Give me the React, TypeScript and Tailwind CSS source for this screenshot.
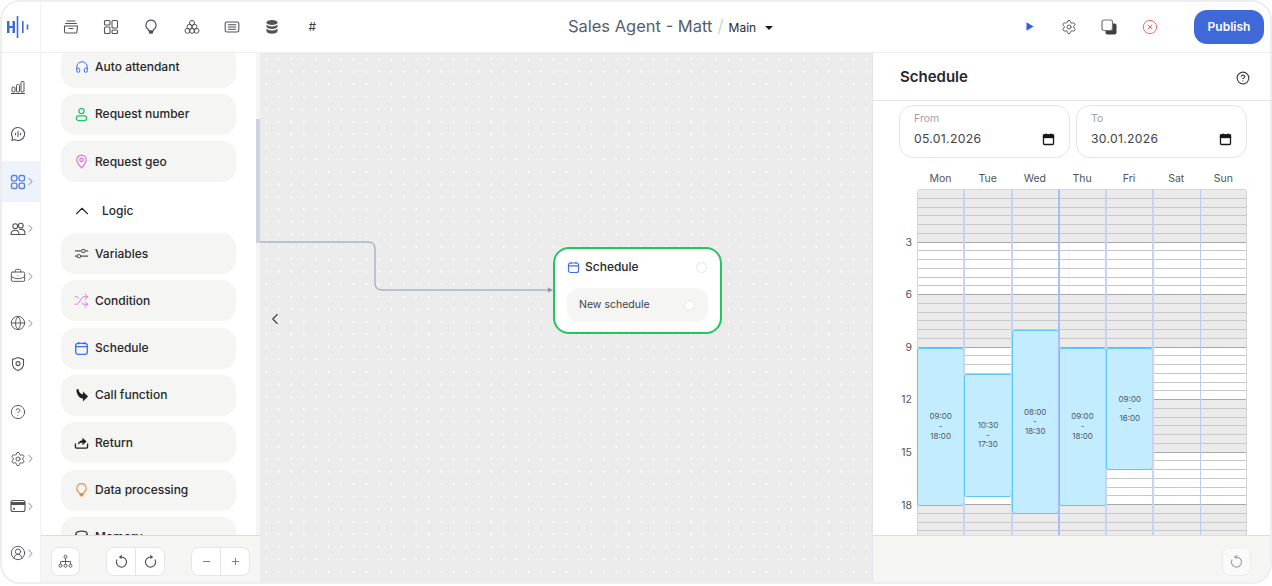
import type { ReactNode } from 'react';
import { Globe, CircleHelp, Settings, CircleUserRound, Headphones, Shuffle, ChevronRight, ChevronUp, ChevronLeft, Minus, Plus, CircleX, BriefcaseBusiness } from 'lucide-react';

const font = { fontFamily: 'Inter, sans-serif' };

// hand drawn icons, lucide has no close match for these
const ChartIcon = () => (
  <svg width="16" height="16" viewBox="0 0 16 16" fill="none" stroke="currentColor" strokeWidth="1">
    <rect x="2" y="8" width="3" height="5" rx="1" />
    <rect x="6.5" y="5.5" width="3" height="7.5" rx="1" />
    <rect x="11" y="2.5" width="3" height="10.5" rx="1" />
    <path d="M1 14.5h14" />
  </svg>
);
const ChatIcon = () => (
  <svg width="16" height="16" viewBox="0 0 16 16" fill="none" stroke="currentColor" strokeWidth="1.1" strokeLinecap="round">
    <path d="M8 1.5a6.5 6.5 0 1 1-3.4 12L2 14.5l.6-3A6.5 6.5 0 0 1 8 1.5z" />
    <path d="M8 5.5v5M5.5 7.2v1.6M10.5 7.2v1.6" />
  </svg>
);
const GridIcon = () => (
  <svg width="16" height="16" viewBox="0 0 16 16" fill="none" stroke="currentColor" strokeWidth="1.4">
    <rect x="1.5" y="1.5" width="5.4" height="5.4" rx="1.6" />
    <rect x="9.1" y="1.5" width="5.4" height="5.4" rx="1.6" />
    <rect x="1.5" y="9.1" width="5.4" height="5.4" rx="1.6" />
    <rect x="9.1" y="9.1" width="5.4" height="5.4" rx="1.6" />
  </svg>
);
const UsersIcon = () => (
  <svg width="16" height="16" viewBox="0 0 16 16" fill="none" stroke="currentColor" strokeWidth="1.1">
    <circle cx="5.2" cy="5.2" r="2.4" />
    <circle cx="10.8" cy="4.6" r="2.4" />
    <path d="M1 13.5c0-2.6 1.8-4.2 4.2-4.2s3.8 1.6 3.8 4.2z" />
    <path d="M9.2 8.4c.5-.2 1-.3 1.6-.3 2.5 0 4.2 1.8 4.2 4.6v.8H9" />
  </svg>
);
const ShieldIcon = () => (
  <svg width="16" height="16" viewBox="0 0 16 16" fill="none" stroke="currentColor" strokeWidth="1.1">
    <path d="M8 1.5l5.5 2v4.7c0 3-2.3 5-5.5 6.3-3.2-1.3-5.5-3.3-5.5-6.3V3.5z" />
    <circle cx="8" cy="7.6" r="2" />
  </svg>
);
const CardIcon = () => (
  <svg width="16" height="16" viewBox="0 0 16 16" fill="none" stroke="currentColor" strokeWidth="1.1">
    <rect x="1" y="2.5" width="14" height="11" rx="2" />
    <rect x="1" y="4" width="14" height="3" fill="currentColor" stroke="none" />
    <rect x="3" y="10" width="2" height="1.6" fill="currentColor" stroke="none" />
  </svg>
);
const ArchiveIcon = () => (
  <svg width="16" height="16" viewBox="0 0 16 16" fill="none" stroke="currentColor" strokeWidth="1.1" strokeLinecap="round">
    <path d="M4 2h8" />
    <path d="M2.5 4.5h11" />
    <path d="M1.5 7h13l-.5 5.5a1.5 1.5 0 0 1-1.5 1.5h-9.5a1.5 1.5 0 0 1-1.5-1.5z" />
    <path d="M6 9.5h4" />
  </svg>
);
const TilesIcon = () => (
  <svg width="16" height="16" viewBox="0 0 16 16" fill="none" stroke="currentColor" strokeWidth="1.1">
    <rect x="1.5" y="1.5" width="5.5" height="4.5" rx="1" />
    <rect x="9" y="1.5" width="5.5" height="7.5" rx="1" />
    <rect x="1.5" y="8" width="5.5" height="6.5" rx="1" />
    <rect x="9" y="11" width="5.5" height="3.5" rx="1" />
  </svg>
);
const BulbIcon = ({ color = 'currentColor' }: { color?: string }) => (
  <svg width="16" height="16" viewBox="0 0 16 16" fill="none" stroke={color} strokeWidth="1.2">
    <path d="M8 1.2a5 5 0 0 0-3 9c.6.5.8 1 .9 1.6h4.2c.1-.6.3-1.1.9-1.6a5 5 0 0 0-3-9z" />
    <path d="M5.9 12h4.2v1.3a1.5 1.5 0 0 1-1.5 1.5H7.4a1.5 1.5 0 0 1-1.5-1.5z" fill={color} stroke="none" />
  </svg>
);
const ClusterIcon = () => (
  <svg width="16" height="16" viewBox="0 0 16 16" fill="none" stroke="currentColor" strokeWidth="1">
    <circle cx="8" cy="4" r="2.5" />
    <circle cx="5.5" cy="7.8" r="2.5" />
    <circle cx="10.5" cy="7.8" r="2.5" />
    <circle cx="3.5" cy="11.8" r="2.5" />
    <circle cx="8" cy="11.8" r="2.5" />
    <circle cx="12.5" cy="11.8" r="2.5" />
  </svg>
);
const ListCardIcon = () => (
  <svg width="16" height="16" viewBox="0 0 16 16" fill="none" stroke="currentColor" strokeWidth="1.1">
    <rect x="1.2" y="3" width="13.6" height="10" rx="1.5" />
    <path d="M3.8 5.8h8.4M3.8 8h8.4M3.8 10.2h8.4" />
  </svg>
);
const DiscsIcon = () => (
  <svg width="16" height="16" viewBox="0 0 16 16" fill="currentColor">
    <ellipse cx="8" cy="3.5" rx="5.5" ry="2.5" />
    <path d="M2.5 5.4c1 1.3 3.1 2 5.5 2s4.5-.7 5.5-2v2.2c0 1.3-2.5 2.4-5.5 2.4s-5.5-1.1-5.5-2.4z" />
    <path d="M2.5 9.4c1 1.3 3.1 2 5.5 2s4.5-.7 5.5-2v2.8c0 1.5-2.5 2.5-5.5 2.5s-5.5-1-5.5-2.5z" />
  </svg>
);
const CopyIcon = () => (
  <svg width="16" height="16" viewBox="0 0 16 16">
    <rect x="4.5" y="4.5" width="11" height="11" rx="2" fill="#3f3f46" />
    <rect x="1" y="1" width="10.5" height="10.5" rx="2" fill="#ffffff" stroke="#71717a" strokeWidth="1.2" />
  </svg>
);
const PlayIcon = () => (
  <svg width="8" height="9" viewBox="0 0 8 9" fill="#2f5fdc">
    <path d="M0.5 0.3L7.5 4.5L0.5 8.7z" />
  </svg>
);
const DateIcon = () => (
  <svg width="13" height="13" viewBox="0 0 13 13" fill="none" stroke="#18181b" strokeWidth="1.3">
    <rect x="1.5" y="2" width="10" height="9.5" rx="1" />
    <rect x="1.5" y="2" width="10" height="2.5" fill="#18181b" />
    <path d="M4 0.5v2M9 0.5v2" />
  </svg>
);
const ScheduleIcon = ({ size = 15 }: { size?: number }) => (
  <svg width={size} height={size} viewBox="0 0 16 16" fill="none" stroke="#3f6df0" strokeWidth="1.4">
    <rect x="1.8" y="2.5" width="12.4" height="11.7" rx="2.5" />
    <path d="M1.8 6h12.4M5 1v2.5M11 1v2.5" />
  </svg>
);
const PersonIcon = () => (
  <svg width="15" height="15" viewBox="0 0 16 16" fill="none" stroke="#22c55e" strokeWidth="1.3">
    <circle cx="8" cy="4.2" r="2.8" />
    <rect x="2.5" y="9.5" width="11" height="5" rx="2.5" />
  </svg>
);
const PinIcon = () => (
  <svg width="15" height="15" viewBox="0 0 16 16" fill="none" stroke="#ec6fd8" strokeWidth="1.3">
    <path d="M8 1.2c3 0 5 2.2 5 5 0 3.5-3 6.6-5 8.6-2-2-5-5.1-5-8.6 0-2.8 2-5 5-5z" />
    <circle cx="8" cy="6.3" r="1.8" />
  </svg>
);
const SlidersIcon = () => (
  <svg width="15" height="15" viewBox="0 0 16 16" fill="none" stroke="#52525b" strokeWidth="1.1">
    <path d="M1 5.2h7M11.8 5.2H15M1 10.8h2.5M7 10.8h8" />
    <circle cx="10" cy="5.2" r="1.8" />
    <circle cx="5.2" cy="10.8" r="1.8" />
  </svg>
);
const CallIcon = () => (
  <svg width="15" height="15" viewBox="0 0 16 16" fill="#1f2023">
    <path d="M2.5 1.5L4.8 1c.3 3 1.5 5 4.7 5.8V3.8L15 9l-5.5 5.5v-3.2C5.5 10.8 2.8 7 2.5 1.5z" />
  </svg>
);
const ReturnIcon = () => (
  <svg width="15" height="15" viewBox="0 0 16 16" fill="none" stroke="#1f2023" strokeWidth="1.4">
    <path d="M1.5 9v3.5A1.5 1.5 0 0 0 3 14h10a1.5 1.5 0 0 0 1.5-1.5V9" />
    <path d="M4 10.5c.3-3 2-4.7 5-5V3l4.5 4L9 11V8.3c-2 0-3.700.7-5 2.200z" fill="#1f2023" stroke="none" />
  </svg>
);
const MemoryIcon = () => (
  <svg width="15" height="15" viewBox="0 0 16 16" fill="none" stroke="#3f3f46" strokeWidth="1.3">
    <ellipse cx="8" cy="4" rx="6" ry="2.8" />
    <path d="M2 4v8c0 1.5 2.7 2.8 6 2.8s6-1.3 6-2.8V4" />
  </svg>
);
const TreeIcon = () => (
  <svg width="15" height="15" viewBox="0 0 16 16" fill="none" stroke="currentColor" strokeWidth="1">
    <circle cx="8" cy="3" r="1.6" />
    <circle cx="2.7" cy="12.5" r="1.6" />
    <circle cx="8" cy="12.5" r="1.6" />
    <circle cx="13.3" cy="12.5" r="1.6" />
    <path d="M8 4.6v6.3M2.7 10.9V8h10.6v2.9" />
  </svg>
);
const UndoIcon = ({ flip }: { flip?: boolean }) => (
  <svg width="15" height="15" viewBox="0 0 16 16" fill="none" stroke="currentColor" strokeWidth="1.2" className={flip ? '-scale-x-100' : ''}>
    <path d="M8 3.2a5.4 5.4 0 1 1-4.7 2.7" />
    <path d="M8.3 0.8v4.8L5 3.2z" fill="currentColor" stroke="none" />
  </svg>
);

const railItems: { icon: ReactNode; arrow?: boolean; active?: boolean; nudge?: boolean }[] = [
  { icon: <ChartIcon /> },
  { icon: <ChatIcon /> },
  { icon: <GridIcon />, arrow: true, active: true },
  { icon: <UsersIcon />, arrow: true },
  { icon: <BriefcaseBusiness size={16} strokeWidth={1.4} />, arrow: true },
  { icon: <Globe size={16} strokeWidth={1.4} />, arrow: true },
  { icon: <ShieldIcon />, nudge: true },
  { icon: <CircleHelp size={16} strokeWidth={1.4} /> },
  { icon: <Settings size={16} strokeWidth={1.4} />, arrow: true },
  { icon: <CardIcon />, arrow: true },
  { icon: <CircleUserRound size={16} strokeWidth={1.4} />, arrow: true },
];

const NodeCard = ({ icon, label }: { icon: ReactNode; label: string }) => (
  <div className="flex h-[41px] w-[175px] shrink-0 items-center gap-[6px] rounded-[14px] bg-[#f5f5f4] pl-[13px] text-[12px] font-medium text-[#27272a]">
    <span className="flex w-[15px] justify-center">{icon}</span>
    {label}
  </div>
);

type Block = { start: number; end: number; label: [string, string] };

const days: { name: string; grey: [number, number][]; block?: Block }[] = [
  { name: 'Mon', grey: [[0, 3], [6, 9], [18, 24]], block: { start: 9, end: 18, label: ['09:00', '18:00'] } },
  { name: 'Tue', grey: [[0, 3], [6, 9], [18, 24]], block: { start: 10.5, end: 17.5, label: ['10:30', '17:30'] } },
  { name: 'Wed', grey: [[0, 3], [6, 8], [18, 24]], block: { start: 8, end: 18.5, label: ['08:00', '18:30'] } },
  { name: 'Thu', grey: [[0, 3], [6, 9], [18, 24]], block: { start: 9, end: 18, label: ['09:00', '18:00'] } },
  { name: 'Fri', grey: [[0, 3], [6, 9], [18, 24]], block: { start: 9, end: 16, label: ['09:00', '16:00'] } },
  { name: 'Sat', grey: [[0, 3], [6, 9], [12, 15], [18, 24]] },
  { name: 'Sun', grey: [[0, 3], [6, 9], [12, 15], [18, 24]] },
];

const HOUR = 17.53;
const slots = Array.from({ length: 48 }, (_, i) => i / 2);
const dividers = ['border-l-0', 'border-l-2 border-[#c6d3f6]', 'border-l-2 border-[#c6d3f6]', 'border-l-2 border-[#a9bdf7]', 'border-l-2 border-[#c6d3f6]', 'border-l-2 border-[#c6d3f6]', 'border-l border-[#bccbf5]'];

const DayColumn = ({ day, index }: { day: (typeof days)[number]; index: number }) => (
  <div className={`relative flex-1 ${dividers[index]}`}>
    {slots.map((t) => {
      const grey = day.grey.some(([a, b]) => t >= a && t < b);
      const major = (t + 0.5) % 3 === 0;
      return (
        <div
          key={t}
          className={`h-[8.765px] border-b ${major ? 'border-[#a8a8a8]' : 'border-[#c8c8c8]'} ${grey ? 'bg-[#ebebeb]' : 'bg-white'}`}
        />
      );
    })}
    {day.block && (
      <div
        className="absolute -left-px -right-px flex items-center justify-center rounded-[3px] border border-[#5cc8f5] bg-[#c3edff] text-center text-[8px] leading-[9.7px] text-[#4b5563]"
        style={{ top: day.block.start * HOUR, height: (day.block.end - day.block.start) * HOUR }}
      >
        <div>
          <div>{day.block.label[0]}</div>
          <div>-</div>
          <div>{day.block.label[1]}</div>
        </div>
      </div>
    )}
  </div>
);

const DateField = ({ label, value }: { label: string; value: string }) => (
  <div className="h-[53px] flex-1 rounded-[14px] border border-[#e2e5e9] bg-white px-[14px]">
    <div className="pt-[6px] text-[10.5px] leading-[14px] text-[#a1a1aa]">{label}</div>
    <div className="mt-[5px] flex items-center justify-between text-[12.2px] leading-[16px] tracking-[0.3px] text-[#3f3f46]">
      {value}
      <DateIcon />
    </div>
  </div>
);

const TopIcon = ({ children }: { children: ReactNode }) => (
  <span className="flex w-[40.2px] justify-center text-[#52525b]">{children}</span>
);

const Logo = () => (
  <svg width="24" height="24" viewBox="0 0 24 24" fill="#3f68d8">
    <rect x="1" y="6" width="2.5" height="12" />
    <rect x="3" y="11" width="4" height="2" />
    <rect x="6.5" y="6" width="2.5" height="12" />
    <rect x="10.7" y="1" width="1.6" height="22" />
    <rect x="16" y="6" width="1.6" height="12" />
    <rect x="20.7" y="9.5" width="1.6" height="5" />
  </svg>
);

export default function App() {
  return (
    <div style={font} className="h-[586px] w-[1272px] overflow-hidden bg-white">
      <div className="flex h-[584px] w-[1272px] flex-col overflow-hidden rounded-[20px] border-2 border-[#eeeeee] bg-white">
        {/* Header */}
        <header className="z-10 flex h-[51px] shrink-0 items-center border-b border-[#efefef] bg-white pb-[1px]">
          <div className="flex h-full w-[39px] items-center border-r border-[#f2f2f2] pl-[4px]">
            <Logo />
          </div>
          <div className="ml-[10px] flex items-center">
            <TopIcon><ArchiveIcon /></TopIcon>
            <TopIcon><TilesIcon /></TopIcon>
            <TopIcon><BulbIcon /></TopIcon>
            <TopIcon><ClusterIcon /></TopIcon>
            <TopIcon><ListCardIcon /></TopIcon>
            <TopIcon><DiscsIcon /></TopIcon>
            <TopIcon><span className="text-[12px] text-[#3f3f46]">#</span></TopIcon>
          </div>
          <div className="ml-[235.6px] flex items-baseline">
            <span className="text-[16.5px] text-[#565e6c]">Sales Agent - Matt</span>
            <span className="mx-[5px] text-[17px] text-[#cbd5e1]">/</span>
            <span className="text-[12px] text-[#27272a]">Main</span>
            <span className="relative -top-[2px] ml-[9px] h-0 w-0 border-x-[4px] border-t-[4px] border-x-transparent border-t-[#18181b]" />
          </div>
          <div className="ml-auto flex items-center">
            <span className="mr-[27px]"><PlayIcon /></span>
            <Settings size={16} strokeWidth={1.4} className="mr-[24px] text-[#52525b]" />
            <span className="mr-[25px]"><CopyIcon /></span>
            <CircleX size={16} strokeWidth={1.5} className="mr-[36px] text-[#ef6a6a]" />
            <button className="mr-[6px] h-[34px] w-[70px] rounded-[13px] bg-[#3f68d8] text-[12px] font-semibold text-white">Publish</button>
          </div>
        </header>

        <div className="flex min-h-0 flex-1">
          {/* Rail */}
          <nav className="flex w-[39px] shrink-0 flex-col gap-[6.3px] border-r border-[#f2f2f2] pt-[13.5px]">
            {railItems.map(({ icon, arrow, active, nudge }, i) => (
              <div
                key={i}
                className={`flex h-[41px] shrink-0 items-center pl-[7.5px] ${nudge ? '-mt-[6.5px]' : ''} ${active ? 'bg-[#eef2fb] text-[#5b7fe0]' : 'text-[#52525b]'}`}
              >
                {icon}
                {arrow && <ChevronRight size={13} strokeWidth={1.6} className="-ml-[2px] text-[#71717a]" />}
              </div>
            ))}
          </nav>

          {/* Node palette */}
          <aside className="relative flex w-[219px] shrink-0 flex-col">
            <div className="min-h-0 flex-1 overflow-hidden pl-[20px]">
              <div className="-mt-[6.5px] flex flex-col gap-[6.3px]">
                <NodeCard icon={<Headphones size={14} strokeWidth={1.7} className="text-[#3f6df0]" />} label="Auto attendant" />
                <NodeCard icon={<PersonIcon />} label="Request number" />
                <NodeCard icon={<PinIcon />} label="Request geo" />
                <div className="flex h-[38.4px] shrink-0 items-center pl-[10px] pt-[7px] text-[12px] font-medium text-[#27272a]">
                  <ChevronUp size={22} strokeWidth={1.2} className="mr-[9px]" />
                  Logic
                </div>
                <NodeCard icon={<SlidersIcon />} label="Variables" />
                <NodeCard icon={<Shuffle size={15} strokeWidth={1.5} className="text-[#ec6fd8]" />} label="Condition" />
                <NodeCard icon={<ScheduleIcon />} label="Schedule" />
                <NodeCard icon={<CallIcon />} label="Call function" />
                <NodeCard icon={<ReturnIcon />} label="Return" />
                <NodeCard icon={<BulbIcon color="#f08a3c" />} label="Data processing" />
                <NodeCard icon={<MemoryIcon />} label="Memory" />
              </div>
            </div>
            <div className="absolute bottom-[47px] right-0 top-0 w-[4px] bg-[#f3f4f5]" />
            <div className="absolute right-0 top-[66px] h-[124px] w-[4px] bg-[#cbd5e1]" />
            <div className="flex h-[47px] shrink-0 items-center border-t border-[#dcdcdc] bg-[#f5f5f4] pl-[10px] pt-[4px]">
              <span className="flex h-[29px] w-[29px] items-center justify-center rounded-[8px] border border-[#e2e5e9] bg-white text-[#52525b]"><TreeIcon /></span>
              <span className="ml-[26px] flex h-[29px] items-center rounded-[8px] border border-[#e2e5e9] bg-white text-[#52525b]">
                <span className="flex h-full w-[29px] items-center justify-center border-r border-[#e2e5e9]"><UndoIcon /></span>
                <span className="flex w-[28px] justify-center"><UndoIcon flip /></span>
              </span>
              <span className="ml-[26px] flex h-[29px] items-center rounded-[8px] border border-[#e2e5e9] bg-white text-[#71717a]">
                <span className="flex h-full w-[29px] items-center justify-center border-r border-[#e2e5e9]"><Minus size={11} /></span>
                <span className="flex w-[28px] justify-center"><Plus size={11} /></span>
              </span>
            </div>
          </aside>

          {/* Canvas */}
          <main className="relative flex-1 bg-[#ebebeb] bg-[radial-gradient(circle,#ffffff_0.85px,transparent_1.1px)] bg-[length:12.5px_12.5px]">
            <ChevronLeft size={18} strokeWidth={1.5} className="absolute left-[6px] top-[257px] text-[#3f3f46]" />
            <svg className="absolute left-0 top-[188px]" width="300" height="54" fill="none">
              <path d="M0 1 H108 Q115 1 115 8 V42 Q115 49 122 49 H288" stroke="#8e99a8" strokeWidth="1" />
              <path d="M288 46.5 L293 49 L288 51.5 Z" fill="#8e99a8" />
            </svg>
            <div className="absolute left-[293px] top-[194px] h-[87px] w-[169px] rounded-[16px] border-2 border-[#22c55e] bg-white px-[12px]">
              <div className="flex h-[36px] items-center text-[12px] font-medium text-[#27272a]">
                <ScheduleIcon size={13} />
                <span className="ml-[5px]">Schedule</span>
                <span className="ml-auto mr-[1px] h-[11px] w-[11px] rounded-full border border-[#e5e5e5] bg-white" />
              </div>
              <div className="mt-[3px] flex h-[34px] items-center justify-between rounded-[12px] bg-[#f5f5f4] pl-[12px] pr-[13px] text-[10.5px] text-[#3f3f46]">
                New schedule
                <span className="h-[11px] w-[11px] rounded-full border border-[#e5e5e5] bg-white" />
              </div>
            </div>
          </main>

          {/* Schedule panel */}
          <section className="flex w-[398px] shrink-0 flex-col border-l border-[#e2e5e9] bg-white">
            <div className="flex h-[48px] shrink-0 items-center justify-between border-b border-[#e2e5e9] pl-[27px] pr-[20px] pt-[2px]">
              <h2 className="text-[15px] font-semibold text-[#27272a]">Schedule</h2>
              <CircleHelp size={14} className="text-[#3f3f46]" />
            </div>
            <div className="min-h-0 flex-1 overflow-hidden pl-[26px] pr-[23px]">
              <div className="mt-[4px] flex gap-[6px]">
                <DateField label="From" value="05.01.2026" />
                <DateField label="To" value="30.01.2026" />
              </div>
              <div className="ml-[18px]">
                <div className="flex h-[31px] items-end pb-[2px]">
                  {days.map((d) => (
                    <div key={d.name} className="flex-1 text-center text-[10.5px] text-[#52525b]">{d.name}</div>
                  ))}
                </div>
                <div className="relative flex rounded-t-[3px] border-x border-t border-[#d4d4d4]">
                  {days.map((d, i) => (
                    <DayColumn key={d.name} day={d} index={i} />
                  ))}
                  <div className="absolute -left-[20px] top-0 text-[10.5px] text-[#52525b]">
                    {[3, 6, 9, 12, 15, 18].map((h) => (
                      <span key={h} className="absolute right-[-14px] leading-none" style={{ top: h * HOUR - 5 }}>{h}</span>
                    ))}
                  </div>
                </div>
              </div>
            </div>
            <div className="flex h-[47px] shrink-0 items-center justify-end border-t border-[#dcdcdc] bg-[#f5f5f4] pr-[19px] pt-[4px]">
              <span className="flex h-[29px] w-[29px] items-center justify-center rounded-[8px] border border-[#ececec] bg-[#fafafa] text-[#a1a1aa]">
                <UndoIcon />
              </span>
            </div>
          </section>
        </div>
      </div>
    </div>
  );
}
